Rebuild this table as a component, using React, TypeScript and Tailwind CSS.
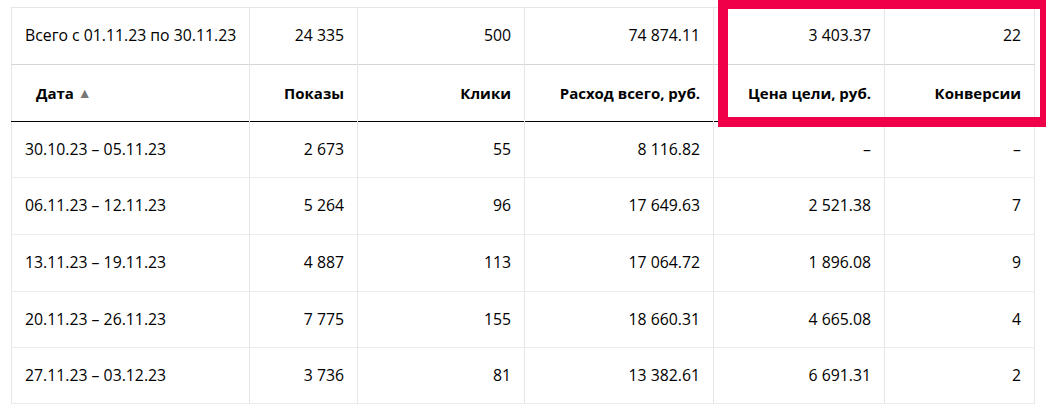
import React from "react";

type Row = {
  date: string;
  shows: string;
  clicks: string;
  cost: string;
  goalPrice: string;
  conversions: string;
};

const rows: Row[] = [
  { date: "30.10.23 – 05.11.23", shows: "2 673", clicks: "55", cost: "8 116.82", goalPrice: "–", conversions: "–" },
  { date: "06.11.23 – 12.11.23", shows: "5 264", clicks: "96", cost: "17 649.63", goalPrice: "2 521.38", conversions: "7" },
  { date: "13.11.23 – 19.11.23", shows: "4 887", clicks: "113", cost: "17 064.72", goalPrice: "1 896.08", conversions: "9" },
  { date: "20.11.23 – 26.11.23", shows: "7 775", clicks: "155", cost: "18 660.31", goalPrice: "4 665.08", conversions: "4" },
  { date: "27.11.23 – 03.12.23", shows: "3 736", clicks: "81", cost: "13 382.61", goalPrice: "6 691.31", conversions: "2" },
];

const rowHeights = ["h-[56px]", "h-[57px]", "h-[57px]", "h-[56px]", "h-[56px]"];

export default function App() {
  const num = "text-right pr-[13px] border-l border-[#e6e6e6]";
  const head = "text-right pr-[13px] border-l border-[#e6e6e6] font-bold text-[15px]";

  return (
    <div
      className="relative w-[1048px] h-[414px] bg-white pl-[11px] pt-[7px] text-[15.8px] text-black"
      style={{ fontFamily: '"Open Sans", "Noto Sans", sans-serif' }}
    >
      <table className="w-[1023px] table-fixed border-collapse border border-[#e6e6e6]">
        <colgroup>
          <col className="w-[238px]" />
          <col className="w-[108px]" />
          <col className="w-[167px]" />
          <col className="w-[189px]" />
          <col className="w-[171px]" />
          <col className="w-[150px]" />
        </colgroup>
        <thead>
          {/* totals for the whole period */}
          <tr className="h-[57px] border-b border-[#d6d6d6]">
            <td className="pl-[13px] whitespace-nowrap">Всего с 01.11.23 по 30.11.23</td>
            <td className={num}>24 335</td>
            <td className={num}>500</td>
            <td className={num}>74 874.11</td>
            <td className={num}>3 403.37</td>
            <td className={num}>22</td>
          </tr>
          <tr className="h-[57px] border-b border-black">
            <th className="pl-[24px] text-left font-bold text-[15px]">
              Дата <span className="text-[14px] text-[#777] align-[1px]">▲</span>
            </th>
            <th className={head}>Показы</th>
            <th className={head}>Клики</th>
            <th className={head}>Расход всего, руб.</th>
            <th className={head}>Цена цели, руб.</th>
            <th className={head}>Конверсии</th>
          </tr>
        </thead>
        <tbody>
          {rows.map((r, i) => (
            <tr key={r.date} className={`${rowHeights[i]} border-b border-[#ececec]`}>
              <td className="pl-[13px] whitespace-nowrap">{r.date}</td>
              <td className={num}>{r.shows}</td>
              <td className={num}>{r.clicks}</td>
              <td className={num}>{r.cost}</td>
              <td className={num}>{r.goalPrice}</td>
              <td className={num}>{r.conversions}</td>
            </tr>
          ))}
        </tbody>
      </table>

      {/* highlight frame around the goal columns */}
      <div className="absolute left-[718px] top-0 w-[328px] h-[127px] border-l-[10px] border-t-[9px] border-r-[6px] border-b-[10px] border-[#ef0049]" />
    </div>
  );
}
